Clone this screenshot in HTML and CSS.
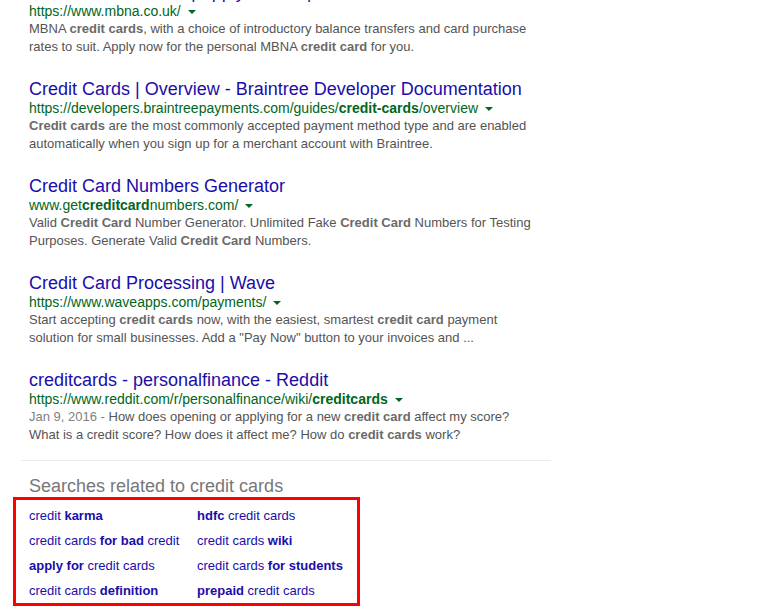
FILE: index.html
```html
<!DOCTYPE html>
<html lang="en">
<head>
    <meta charset="UTF-8">
    <meta name="viewport" content="width=device-width, initial-scale=1.0">
    <title>credit cards - Search</title>
    <link rel="stylesheet" href="styles.css">
</head>
<body>
    <div class="results">
        <div class="result first">
            <h3 class="title"><a href="#">MBNA Credit Cards | Apply Online | MBNA</a></h3>
            <div class="url">https://www.mbna.co.uk/<span class="arrow"></span></div>
            <div class="snippet">MBNA <b>credit cards</b>, with a choice of introductory balance transfers and card purchase rates to suit. Apply now for the personal MBNA <b>credit card</b> for you.</div>
        </div>

        <div class="result">
            <h3 class="title"><a href="#">Credit Cards | Overview - Braintree Developer Documentation</a></h3>
            <div class="url">https://developers.braintreepayments.com/guides/<b>credit-cards</b>/overview<span class="arrow"></span></div>
            <div class="snippet"><b>Credit cards</b> are the most commonly accepted payment method type and are enabled automatically when you sign up for a merchant account with Braintree.</div>
        </div>

        <div class="result">
            <h3 class="title"><a href="#">Credit Card Numbers Generator</a></h3>
            <div class="url">www.get<b>creditcard</b>numbers.com/<span class="arrow"></span></div>
            <div class="snippet">Valid <b>Credit Card</b> Number Generator. Unlimited Fake <b>Credit Card</b> Numbers for Testing Purposes. Generate Valid <b>Credit Card</b> Numbers.</div>
        </div>

        <div class="result">
            <h3 class="title"><a href="#">Credit Card Processing | Wave</a></h3>
            <div class="url">https://www.waveapps.com/payments/<span class="arrow"></span></div>
            <div class="snippet">Start accepting <b>credit cards</b> now, with the easiest, smartest <b>credit card</b> payment solution for small businesses. Add a "Pay Now" button to your invoices and ...</div>
        </div>

        <div class="result">
            <h3 class="title"><a href="#">creditcards - personalfinance - Reddit</a></h3>
            <div class="url">https://www.reddit.com/r/personalfinance/wiki/<b>creditcards</b><span class="arrow"></span></div>
            <div class="snippet"><span class="date">Jan 9, 2016 - </span>How does opening or applying for a new <b>credit card</b> affect my score? What is a credit score? How does it affect me? How do <b>credit cards</b> work?</div>
        </div>
    </div>

    <hr class="divider">

    <div class="related">
        <h3 class="related-title">Searches related to credit cards</h3>
        <div class="related-box">
            <a href="#">credit <b>karma</b></a>
            <a href="#"><b>hdfc</b> credit cards</a>
            <a href="#">credit cards <b>for bad</b> credit</a>
            <a href="#">credit cards <b>wiki</b></a>
            <a href="#"><b>apply for</b> credit cards</a>
            <a href="#">credit cards <b>for students</b></a>
            <a href="#">credit cards <b>definition</b></a>
            <a href="#"><b>prepaid</b> credit cards</a>
        </div>
    </div>
</body>
</html>
```

FILE: styles.css
```css
body {
    margin: 0;
    background: #fff;
    font-family: Arial, "Liberation Sans", sans-serif;
    overflow: hidden;
}

.results {
    padding-left: 29px;
    margin-top: -18px;
}

.result {
    width: 512px;
    margin-bottom: 23px;
}

.title {
    margin: 0;
    font-size: 18px;
    font-weight: normal;
    line-height: 20px;
    white-space: nowrap;
}

.title a {
    color: #1a0dab;
    text-decoration: none;
}

.url {
    font-size: 14px;
    line-height: 18px;
    color: #006621;
    white-space: nowrap;
}

.url b {
    font-weight: bold;
}

.arrow {
    display: inline-block;
    width: 0;
    height: 0;
    margin-left: 7px;
    vertical-align: middle;
    border-top: 4px solid #006621;
    border-left: 4px solid transparent;
    border-right: 4px solid transparent;
}

.snippet {
    font-size: 13px;
    line-height: 18px;
    color: #545454;
}

.snippet b {
    color: #6a6a6a;
}

.date {
    color: #808080;
}

.divider {
    margin: 0 0 0 21px;
    width: 530px;
    height: 0;
    border: none;
    border-top: 1px solid #ebebeb;
    position: relative;
    top: -7px;
}

.related {
    margin-top: 7px;
}

.related-title {
    margin: 0 0 0 29px;
    font-size: 18px;
    font-weight: normal;
    line-height: 22px;
    color: #777;
}

.related-box {
    display: grid;
    grid-template-columns: 168px 168px;
    grid-auto-rows: 25px;
    margin-left: 13px;
    padding: 3px 0 0 13px;
    box-sizing: border-box;
    width: 347px;
    border: 3px solid #f00;
}

.related-box a {
    font-size: 13px;
    line-height: 25px;
    color: #1a0dab;
    text-decoration: none;
    white-space: nowrap;
}
```
